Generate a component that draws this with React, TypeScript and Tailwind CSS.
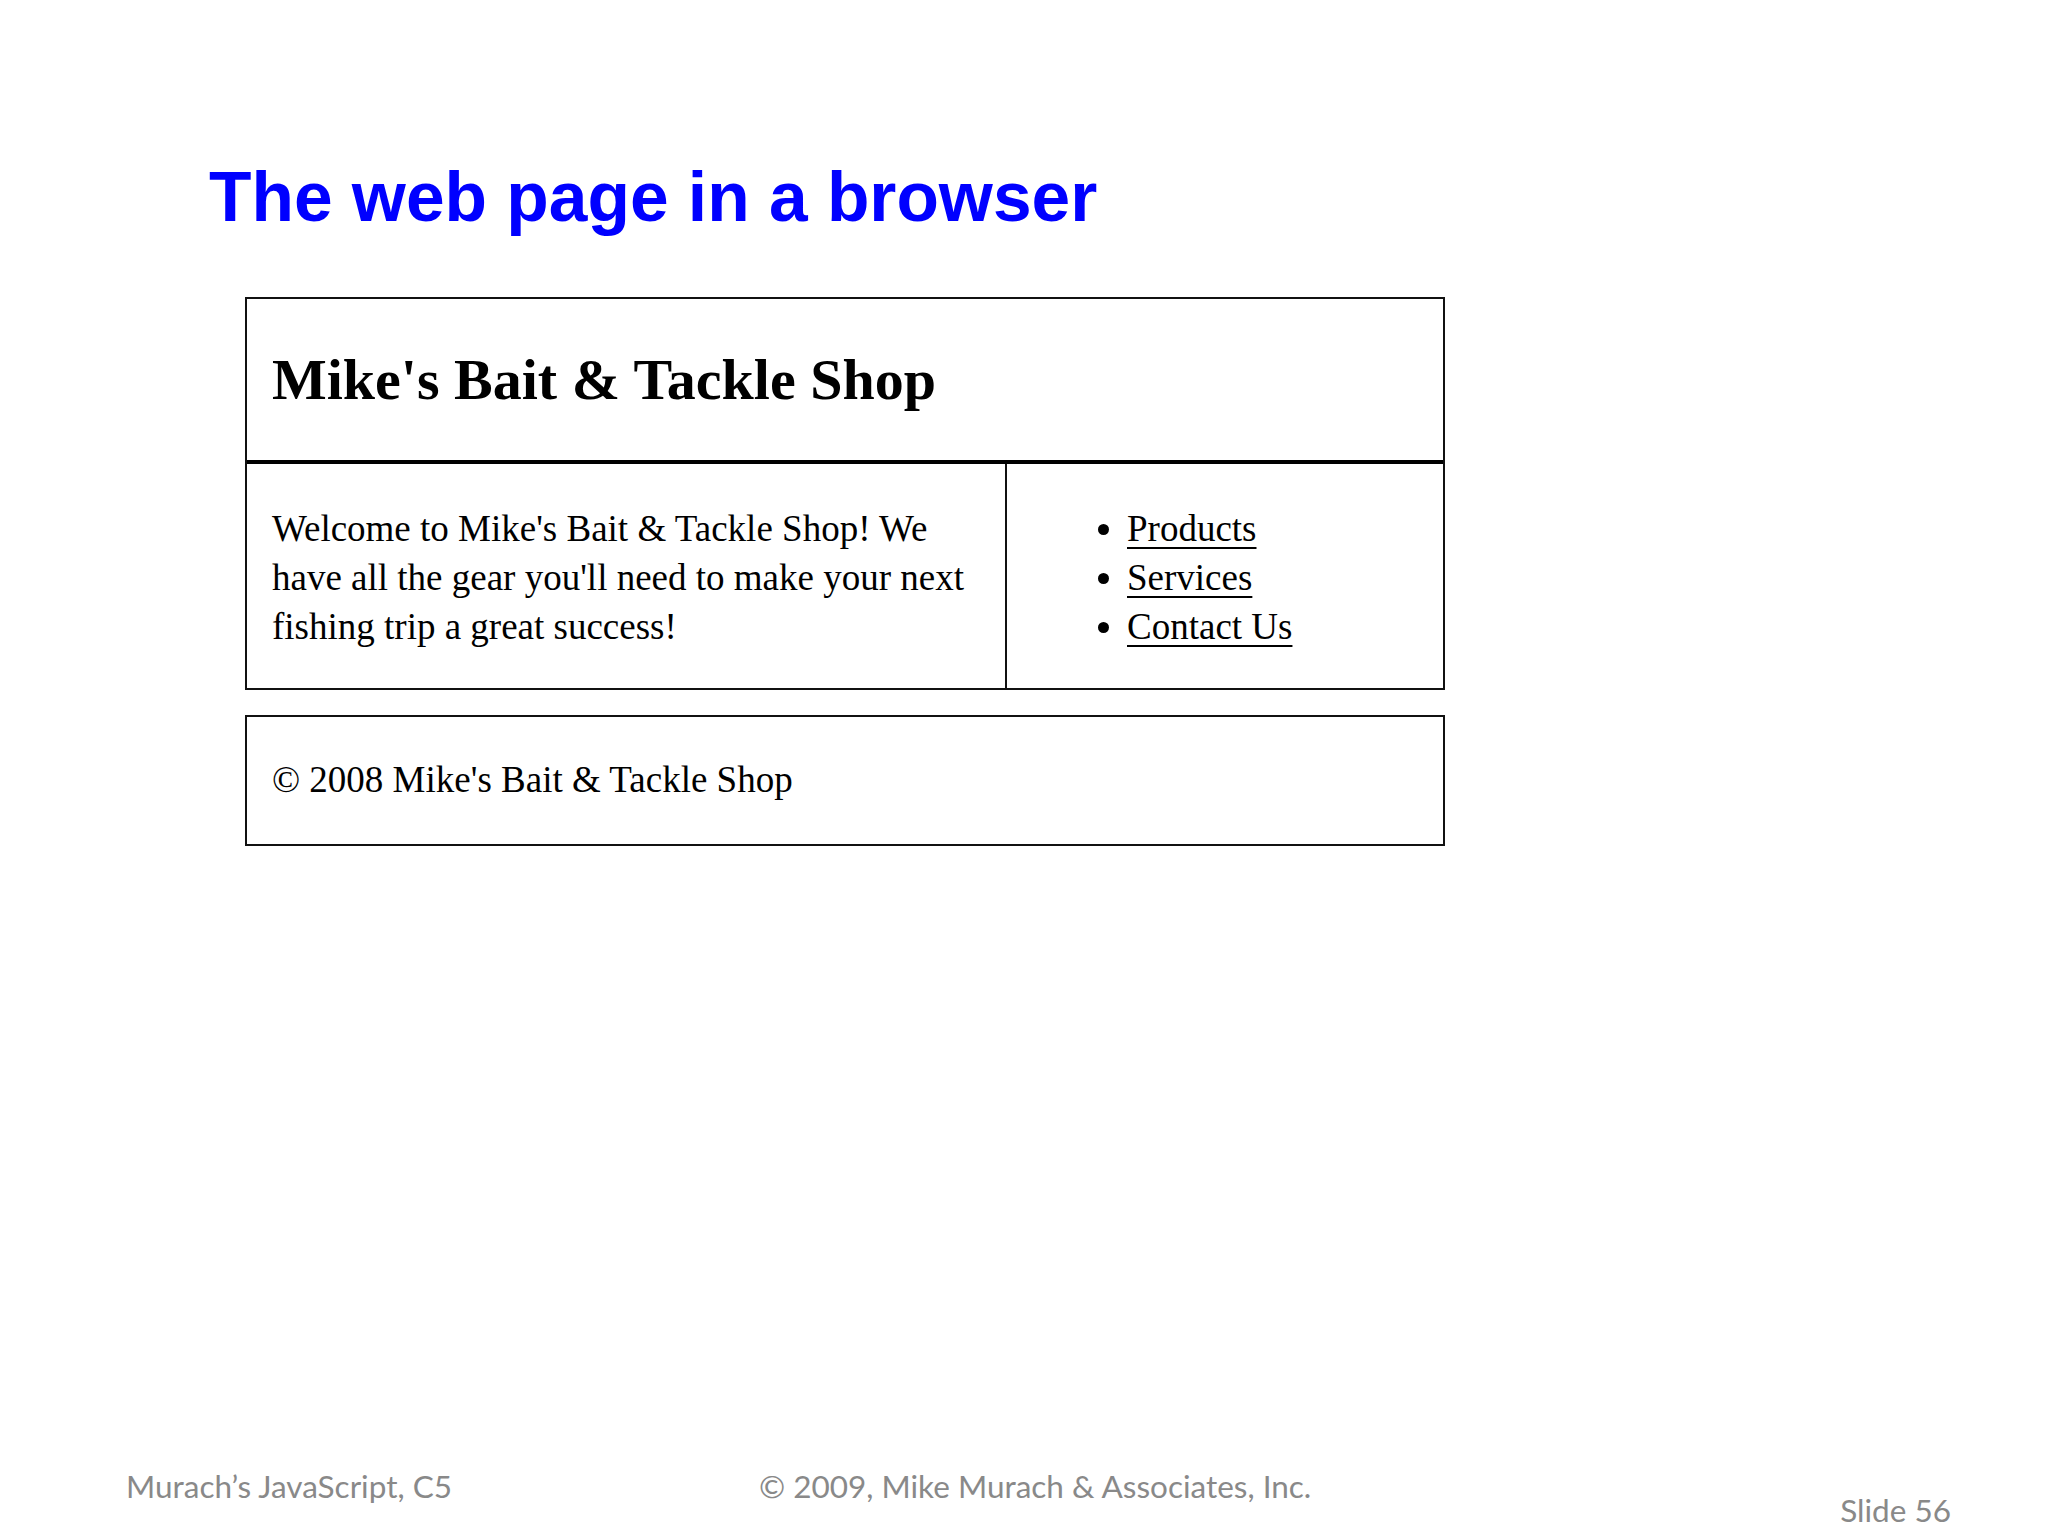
export default function App() {
  const links = ["Products", "Services", "Contact Us"];

  return (
    <div className="w-[2048px] h-[1536px] flex flex-col bg-white overflow-hidden">
      {/* slide title */}
      <h1 className="pl-[209px] pt-[163px] text-[69.5px] leading-[69px] font-bold text-[#0000ff] font-['Liberation_Sans',Arial,sans-serif]">
        The web page in a browser
      </h1>

      {/* browser screenshot */}
      <div className="ml-[245px] mt-[65px] w-[1200px] font-['Liberation_Serif','Times_New_Roman',serif] text-black">
        <div className="border-2 border-[#111]">
          <div className="pl-[25px] pt-[47px] pb-[47px] border-b-4 border-black">
            <h2 className="text-[58px] leading-[67px] font-bold">Mike's Bait &amp; Tackle Shop</h2>
          </div>
          <div className="flex">
            <div className="w-[760px] shrink-0 border-r-2 border-[#111] px-[25px] pt-[40px] pb-[37px]">
              <p className="text-[37px] leading-[49px]">
                Welcome to Mike's Bait &amp; Tackle Shop! We have all the gear you'll need to make your next
                fishing trip a great success!
              </p>
            </div>
            <div className="flex-1 pl-[25px] pt-[40px]">
              <ul className="list-disc pl-[95px] text-[37px] leading-[49px]">
                {links.map((l) => (
                  <li key={l}>
                    <a href="#" className="underline underline-offset-[6px] decoration-2">
                      {l}
                    </a>
                  </li>
                ))}
              </ul>
            </div>
          </div>
        </div>

        <div className="mt-[25px] border-2 border-[#111] pl-[25px] pt-[38px] pb-[40px]">
          <p className="text-[37px] leading-[49px]">© 2008 Mike's Bait &amp; Tackle Shop</p>
        </div>
      </div>

      {/* slide footer */}
      <div className="mt-auto h-[70px] flex items-start pl-[126px] pr-[97px] text-[31.5px] leading-[40px] text-[#898989] font-['Lato','Open_Sans',sans-serif]">
        <span className="w-[633px] shrink-0">Murach’s JavaScript, C5</span>
        <span className="flex-1">© 2009, Mike Murach &amp; Associates, Inc.</span>
        <span className="mt-[24px]">Slide 56</span>
      </div>
    </div>
  );
}
